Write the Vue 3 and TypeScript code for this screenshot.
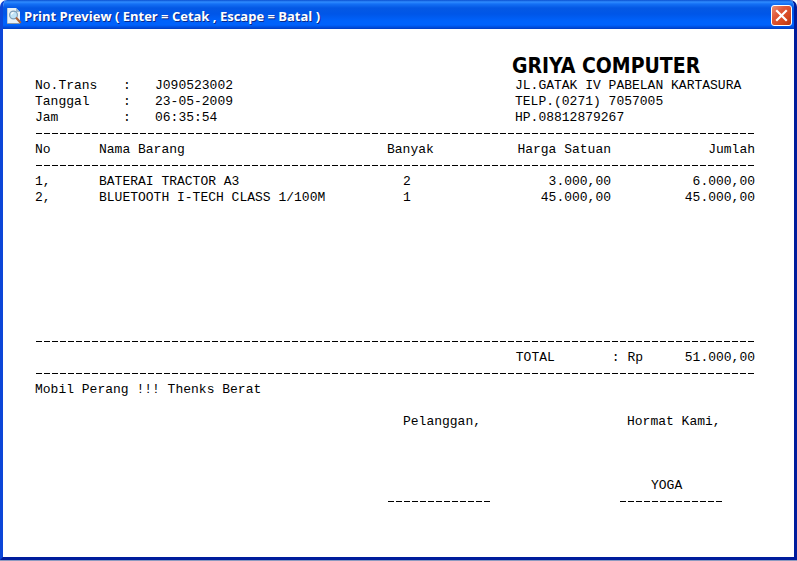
<script setup lang="ts">
interface Item {
  no: string
  name: string
  qty: number
  price: string
  amount: string
}

const meta: { label: string; value: string }[] = [
  { label: 'No.Trans', value: 'J090523002' },
  { label: 'Tanggal', value: '23-05-2009' },
  { label: 'Jam', value: '06:35:54' },
]

const items: Item[] = [
  { no: '1,', name: 'BATERAI TRACTOR A3', qty: 2, price: '3.000,00', amount: '6.000,00' },
  { no: '2,', name: 'BLUETOOTH I-TECH CLASS 1/100M', qty: 1, price: '45.000,00', amount: '45.000,00' },
]
</script>

<template>
  <div class="window">
    <header class="titlebar">
      <svg class="app-icon" viewBox="0 0 16 16" aria-hidden="true">
        <path d="M1 0h9l4 4v12H1z" fill="#e9f1f6" />
        <path d="M1 0h1v16H1z" fill="#b9cbd8" />
        <path d="M10 0l4 4h-4z" fill="#9fb9cc" />
        <path d="M1 15h13v1H1z" fill="#8d9aa8" />
        <circle cx="7.5" cy="7" r="3.9" fill="#bfe3f7" stroke="#7f9db6" stroke-width="1.2" />
        <path d="M5.4 6.6a2.3 2.3 0 0 1 2.3-2" fill="none" stroke="#fff" stroke-width="1.1" />
        <path d="M10.6 10.2l3.6 4" stroke="#a8623c" stroke-width="2.2" stroke-linecap="round" />
      </svg>
      <h1 class="caption">Print Preview ( Enter = Cetak , Escape = Batal )</h1>
      <button class="close" type="button" aria-label="Close">
        <svg viewBox="0 0 19 19" aria-hidden="true">
          <path d="M5 5l9 9M14 5l-9 9" stroke="#fff" stroke-width="2.2" stroke-linecap="square" />
        </svg>
      </button>
    </header>

    <main class="paper">
      <section class="head">
        <dl class="meta">
          <div v-for="m in meta" :key="m.label" class="meta-row">
            <dt>{{ m.label }}</dt>
            <dd>:</dd>
            <dd>{{ m.value }}</dd>
          </div>
        </dl>
        <address class="store">
          <strong class="store-name">GRIYA COMPUTER</strong>
          <span>JL.GATAK IV PABELAN KARTASURA</span>
          <span>TELP.(0271) 7057005</span>
          <span>HP.08812879267</span>
        </address>
      </section>

      <section class="body">
        <table class="items">
          <colgroup>
            <col class="c-no" />
            <col />
            <col class="c-qty" />
            <col class="c-price" />
            <col class="c-amount" />
          </colgroup>
          <thead>
            <tr>
              <th>No</th>
              <th>Nama Barang</th>
              <th>Banyak</th>
              <th class="num">Harga Satuan</th>
              <th class="num">Jumlah</th>
            </tr>
          </thead>
          <tbody>
            <tr v-for="it in items" :key="it.no">
              <td>{{ it.no }}</td>
              <td>{{ it.name }}</td>
              <td class="qty">{{ it.qty }}</td>
              <td class="num">{{ it.price }}</td>
              <td class="num">{{ it.amount }}</td>
            </tr>
          </tbody>
        </table>
      </section>

      <hr class="rule" />
      <div class="total">
        <span class="total-label">TOTAL</span>
        <span>: Rp</span>
        <span class="total-value">51.000,00</span>
      </div>
      <hr class="rule" />
      <p class="note">Mobil Perang !!! Thenks Berat</p>

      <section class="signatures">
        <div class="sign customer">
          <span class="sign-title">Pelanggan,</span>
          <hr class="rule" />
        </div>
        <div class="sign">
          <span class="sign-title">Hormat Kami,</span>
          <span class="sign-name">YOGA</span>
          <hr class="rule" />
        </div>
      </section>
    </main>
  </div>
</template>

<style>
body {
  background: #fff;
}
</style>

<style scoped>
.window {
  box-sizing: border-box;
  min-height: calc(100vh - 1px);
  margin-bottom: 1px;
  display: flex;
  flex-direction: column;
  border: 3px solid #001c9c;
  border-top: 0;
  border-left-color: #0c46d8;
  border-radius: 7px 7px 0 0;
  background: #fff;
  box-shadow: 0 1px 0 #8c9ac0;
  overflow: hidden;
}
.titlebar {
  display: flex;
  align-items: center;
  box-sizing: border-box;
  height: 29px;
  margin: 0 -3px;
  padding: 2px 5px 0 6px;
  gap: 2px;
  background: linear-gradient(#0a4fd0 0, #2f8cff 2px, #1470f5 4px, #0458e4 8px, #0056e8 14px, #0062fb 21px, #0062fc 25px, #0046d2 28px, #003cc0 29px);
}
.app-icon {
  width: 16px;
  height: 16px;
}
.caption {
  flex: 1;
  margin: 0;
  font: bold 13px/16px "Open Sans", sans-serif;
  color: #fff;
  text-shadow: 1px 1px 0 #0a2a8c;
  white-space: nowrap;
}
.close {
  box-sizing: border-box;
  width: 21px;
  height: 21px;
  padding: 0;
  border: 1px solid #fff;
  border-radius: 3px;
  background: linear-gradient(135deg, #eb9175 0, #e0593a 35%, #d6481f 70%, #b53512 100%);
}
.close svg {
  display: block;
  width: 19px;
  height: 19px;
}
.paper {
  flex: 1;
  padding: 25px 39px 47px 32px;
  font: 13px/16px "Liberation Mono", monospace;
  color: #000;
}
.head {
  display: flex;
  justify-content: space-between;
  align-items: flex-end;
}
.meta {
  margin: 0;
}
.meta-row {
  display: grid;
  grid-template-columns: 88px 32px auto;
}
.meta dd {
  margin: 0;
}
.store {
  display: flex;
  flex-direction: column;
  width: 240px;
  font-style: normal;
}
.store-name {
  margin-left: -3px;
  font: bold 21px/24px "DejaVu Sans Condensed", "DejaVu Sans", sans-serif;
  white-space: nowrap;
}
.body {
  min-height: 208px;
}
.items {
  width: 100%;
  table-layout: fixed;
  border-collapse: collapse;
}
.c-no {
  width: 64px;
}
.c-qty {
  width: 96px;
}
.c-price {
  width: 128px;
}
.c-amount {
  width: 144px;
}
.items th,
.items td {
  padding: 0;
  font-weight: normal;
  text-align: left;
  white-space: nowrap;
}
.items th {
  padding: 16px 0;
}
.items .num {
  text-align: right;
}
.items .qty {
  padding-left: 16px;
}
.items thead tr {
  background-image:
    linear-gradient(90deg, transparent 1px, #000 1px, #000 7px, transparent 7px),
    linear-gradient(90deg, transparent 1px, #000 1px, #000 7px, transparent 7px);
  background-size: 8px 1px;
  background-position: 0 7px, 0 39px;
  background-repeat: repeat-x;
}
.rule {
  height: 16px;
  margin: 0;
  border: 0;
  background: linear-gradient(90deg, transparent 1px, #000 1px, #000 7px, transparent 7px) 0 7px / 8px 1px repeat-x;
}
.total {
  display: flex;
  justify-content: flex-end;
}
.total-label {
  width: 96px;
}
.total-value {
  width: 112px;
  text-align: right;
}
.note {
  margin: 0;
}
.signatures {
  display: flex;
  justify-content: flex-end;
  gap: 128px;
  padding: 16px 32px 0 0;
}
.sign {
  display: flex;
  flex-direction: column;
  width: 104px;
}
.sign-title {
  padding-left: 8px;
  margin-bottom: 48px;
}
.customer .sign-title {
  padding-left: 16px;
}
.sign-name {
  padding-left: 32px;
}
.sign .rule {
  margin-top: auto;
}
</style>
